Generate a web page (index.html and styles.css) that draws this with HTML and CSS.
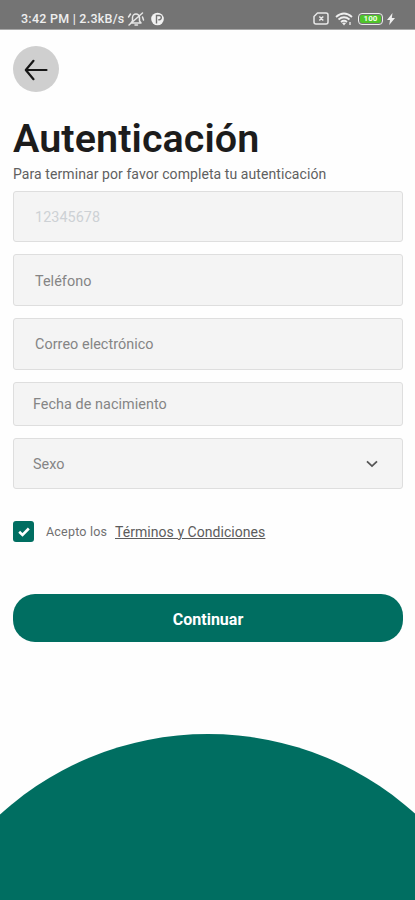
FILE: index.html
```html
<!DOCTYPE html>
<html lang="es">
<head>
<meta charset="utf-8">
<meta name="viewport" content="width=device-width, initial-scale=1">
<title>Autenticación</title>
<link rel="stylesheet" href="styles.css">
</head>
<body>
<div class="screen">
  <header class="status">
    <span class="status-text">3:42 PM | 2.3kB/s</span>
    <svg class="bell" width="18" height="16" viewBox="0 0 18 16" fill="none" stroke="#e6e6e6" stroke-width="1.5" stroke-linecap="round" stroke-linejoin="round"><path d="M4 12h10l-1.500-2V6.500a3.500 3.500 0 0 0-7 0V10zM8 14h2.500M2 14 15.500 2M1.500 6l2-3M16.500 9l-1-3"/></svg>
    <svg class="app" width="13" height="14" viewBox="0 0 13 14"><circle cx="6.500" cy="7" r="6.300" fill="#f2f2f2"/><path d="M5.500 11.500V3.500h2.700a2 2 0 0 1 0 4.200H7.300" fill="none" stroke="#747474" stroke-width="1.400"/></svg>
    <span class="spacer"></span>
    <svg class="sim" width="16" height="13" viewBox="0 0 16 13" fill="none" stroke="#e8e8e8" stroke-width="1.500" stroke-linejoin="round"><path d="M4.500 1H13a2 2 0 0 1 2 2v7a2 2 0 0 1-2 2H3a2 2 0 0 1-2-2V4.500zM6.300 4.500l4 4M10.300 4.500l-4 4"/></svg>
    <svg class="wifi" width="18" height="14" viewBox="0 0 18 14" fill="none" stroke="#eee" stroke-width="1.800"><path d="M1 5q8-7 16 0M3.500 7.500q5.500-4.500 11 0M6 10q3-2.500 6 0"/><path d="m7 11 2 2.500 2-2.500q-2-1.200-4 0" fill="#eee" stroke="none"/><path d="M15 10v3" stroke-width="1.300"/></svg>
    <span class="battery"><span class="level">100</span></span>
    <svg class="bolt" width="8" height="12" viewBox="0 0 8 12"><path d="M5.500 0 0 7h3L2.200 12 8 5H4.800z" fill="#eee"/></svg>
  </header>

  <main class="content">
    <button class="back" aria-label="Volver">
      <svg width="24" height="22" viewBox="0 0 24 22" fill="none" stroke="#161616" stroke-width="2.200" stroke-linecap="round" stroke-linejoin="round"><path d="M22.500 11H1.800M9.500 1.800 1.800 11l7.700 9.200"/></svg>
    </button>
    <h1 class="title"><span>Autenticación</span></h1>
    <p class="subtitle"><span>Para terminar por favor completa tu autenticación</span></p>

    <div class="form">
      <div class="field light"><span>12345678</span></div>
      <div class="field"><span>Teléfono</span></div>
      <div class="field"><span>Correo electrónico</span></div>
      <div class="field short"><span>Fecha de nacimiento</span></div>
      <div class="field select"><span>Sexo</span>
        <svg width="12" height="8" viewBox="0 0 12 8" fill="none" stroke="#555" stroke-width="1.800"><path d="m1 1.300 5 4.800 5-4.800"/></svg>
      </div>
    </div>

    <div class="terms">
      <span class="check"><svg width="12" height="10" viewBox="0 0 12 10" fill="none" stroke="#fff" stroke-width="2.600"><path d="m1.200 4.800 3.300 3.200 6.300-6.500"/></svg></span>
      <span class="accept">Acepto los</span>
      <a class="link">Términos y Condiciones</a>
    </div>

    <button class="continue">Continuar</button>
  </main>
  <div class="hill"></div>
</div>
</body>
</html>
```
FILE: styles.css
```css
* { box-sizing: border-box; }
body { margin: 0; background: #fff; font-family: Roboto, "Liberation Sans", sans-serif; }
.screen { width: 415px; height: 900px; overflow: hidden; display: flex; flex-direction: column; background: #fefefe; }
.status { height: 30px; flex: none; background: #747474; border-bottom: 1px solid #a8a8a8; display: flex; align-items: center; padding: 8px 20px 0 21px; color: #eee; }
.status-text { font-size: 12.500px; font-weight: 500; letter-spacing: .24px; white-space: nowrap; width: 106px; }
.app { margin-left: 6px; }
.spacer { flex: 1; }
.wifi { margin-left: 6px; }
.battery { width: 25px; height: 12px; margin-left: 5px; border: 1.5px solid #eee; border-radius: 4px; padding: 1px; display: flex; }
.level { flex: 1; background: #4fc52b; border-radius: 2px; color: #f2ffe9; font-size: 8px; line-height: 8px; font-weight: 700; text-align: center; }
.bolt { margin-left: 4px; }
.content { padding: 0 12px 0 13px; flex: none; display: flex; flex-direction: column; height: 704px; }
.back { width: 46px; height: 46px; margin-top: 16px; border: 0; border-radius: 50%; background: #cfcfcf; padding: 1px 0 0; display: flex; align-items: center; justify-content: center; flex: none; }
.title { margin: 25px 0 0; height: 44px; line-height: 44px; font-size: 39.500px; letter-spacing: .08px; font-weight: 600; color: #1c1c1c; white-space: nowrap; }
.subtitle { margin: 4px 0 0; height: 18px; line-height: 18px; font-size: 14px; letter-spacing: .08px; color: #606060; white-space: nowrap; }
.form { margin-top: 7.500px; display: flex; flex-direction: column; gap: 12px; }
.field { height: 51.700px; border: 1px solid #dedede; border-radius: 3px; background: #f4f4f4; padding: 1px 24px 0 21px; display: flex; align-items: center; justify-content: space-between; font-size: 14.400px; letter-spacing: .05px; color: #858585; }
.field span { padding-top: 1.500px; }
.light { color: #cdd1d5; }
.short { height: 44px; padding-left: 19px; padding-top: 0; }
.select { padding-left: 19px; }
.terms { display: flex; align-items: center; margin-top: 32px; height: 21px; color: #707070; }
.check { width: 21px; height: 21px; border-radius: 3px; background: #006e61; display: flex; align-items: center; justify-content: center; }
.accept { width: 69px; margin-left: 12px; font-size: 12.500px; letter-spacing: .2px; }
.link { font-size: 14px; letter-spacing: .05px; text-decoration: underline; color: #5c5c5c; }
.continue { margin-top: 52px; height: 48px; border: 0; border-radius: 22px; background: #006e61; color: #fff; padding: 2px 0 0; font: 700 16px Roboto, "Liberation Sans", sans-serif; }
.hill { width: 618px; height: 618px; border-radius: 50%; background: #006e61; flex: none; align-self: center; }
```
